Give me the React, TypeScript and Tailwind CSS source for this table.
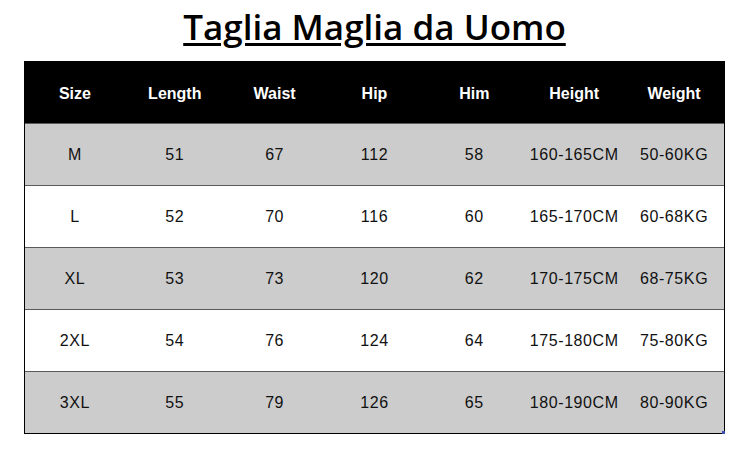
const headers = ["Size", "Length", "Waist", "Hip", "Him", "Height", "Weight"];

const rows = [
  ["M", "51", "67", "112", "58", "160-165CM", "50-60KG"],
  ["L", "52", "70", "116", "60", "165-170CM", "60-68KG"],
  ["XL", "53", "73", "120", "62", "170-175CM", "68-75KG"],
  ["2XL", "54", "76", "124", "64", "175-180CM", "75-80KG"],
  ["3XL", "55", "79", "126", "65", "180-190CM", "80-90KG"],
];

export default function App() {
  return (
    <div className="w-[749px] h-[457px] bg-white overflow-hidden">
      {/* Title */}
      <div className="flex justify-center pt-[7px]">
        <h1 className="text-[35px] leading-[40px] font-semibold text-black underline decoration-[3px] underline-offset-[3px] font-['Open_Sans',sans-serif]">
          Taglia Maglia da Uomo
        </h1>
      </div>

      {/* Size table */}
      <div className="relative ml-[24px] mt-[14px] w-[701px] border border-black font-['Liberation_Sans',Arial,sans-serif]">
        <div className="grid grid-cols-7 h-[61px] pt-[3px] bg-black text-white text-[16px] font-bold">
          {headers.map((h) => (
            <div key={h} className="flex items-center justify-center">
              {h}
            </div>
          ))}
        </div>
        {rows.map((row, i) => (
          <div
            key={row[0]}
            className={`grid grid-cols-7 h-[62px] border-t border-[#5a5a5a] text-[16px] text-[#111] ${
              i % 2 === 0 ? "bg-[#cccccc]" : "bg-white"
            }`}
          >
            {row.map((cell, j) => (
              <div key={j} className="flex items-center justify-center tracking-[0.6px]">
                {cell}
              </div>
            ))}
          </div>
        ))}
        <div className="absolute right-[-1px] bottom-[-1px] w-[3px] h-[3px] bg-[#3b4fb0]" />
      </div>
    </div>
  );
}
